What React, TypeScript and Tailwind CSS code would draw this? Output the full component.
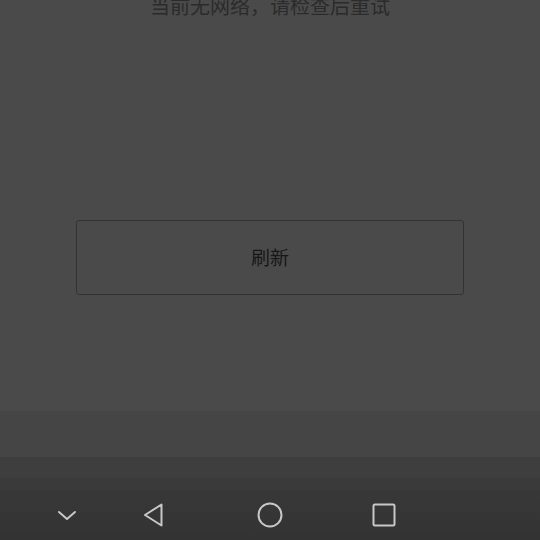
import React from "react";

const NavBar = () => {
  return (
    <div className="relative h-[50px] w-full">
      <svg className="absolute left-[56px] top-[17px]" width="22" height="16" viewBox="0 0 22 16">
        <path d="M3 5 L11 12 L19 5" fill="none" stroke="#c8c8c8" strokeWidth="2" strokeLinejoin="round" strokeLinecap="round" />
      </svg>
      <svg className="absolute left-[141px] top-[12px]" width="26" height="26" viewBox="0 0 26 26">
        <path d="M20.5 2.5 L20.5 23.5 L4 13 Z" fill="none" stroke="#c8c8c8" strokeWidth="2" strokeLinejoin="round" />
      </svg>
      <svg className="absolute left-[257px] top-[12px]" width="26" height="26" viewBox="0 0 26 26">
        <circle cx="13" cy="13" r="11.5" fill="none" stroke="#c8c8c8" strokeWidth="2" />
      </svg>
      <svg className="absolute left-[371px] top-[12px]" width="26" height="26" viewBox="0 0 26 26">
        <rect x="2.5" y="2.5" width="21" height="21" rx="1.5" fill="none" stroke="#c8c8c8" strokeWidth="2" />
      </svg>
    </div>
  );
};

const App = () => {
  return (
    <div
      className="flex h-[540px] w-[540px] flex-col overflow-hidden bg-[#4a4a4a]"
      style={{ fontFamily: '"Noto Sans CJK SC", "Noto Sans", sans-serif' }}
    >
      <div className="flex h-[411px] flex-col items-center">
        <div className="-mt-[8px] text-[20px] leading-[28px] text-[#2b2b2b]">当前无网络，请检查后重试</div>
        <button className="mt-[200px] flex h-[75px] w-[388px] items-center justify-center rounded-[3px] border-[1.5px] border-[#333333] text-[19px] text-[#171717]">
          刷新
        </button>
      </div>
      <div className="flex flex-1 flex-col">
        <div className="h-[46px] bg-[#454545]"></div>
        <div className="h-[21px] bg-[#3e3e3e]"></div>
        <div className="h-[12px] bg-[#3a3a3a]"></div>
        <div className="flex-1 bg-gradient-to-b from-[#383838] to-[#333333]">
          <NavBar />
        </div>
      </div>
    </div>
  );
};

export default App;
